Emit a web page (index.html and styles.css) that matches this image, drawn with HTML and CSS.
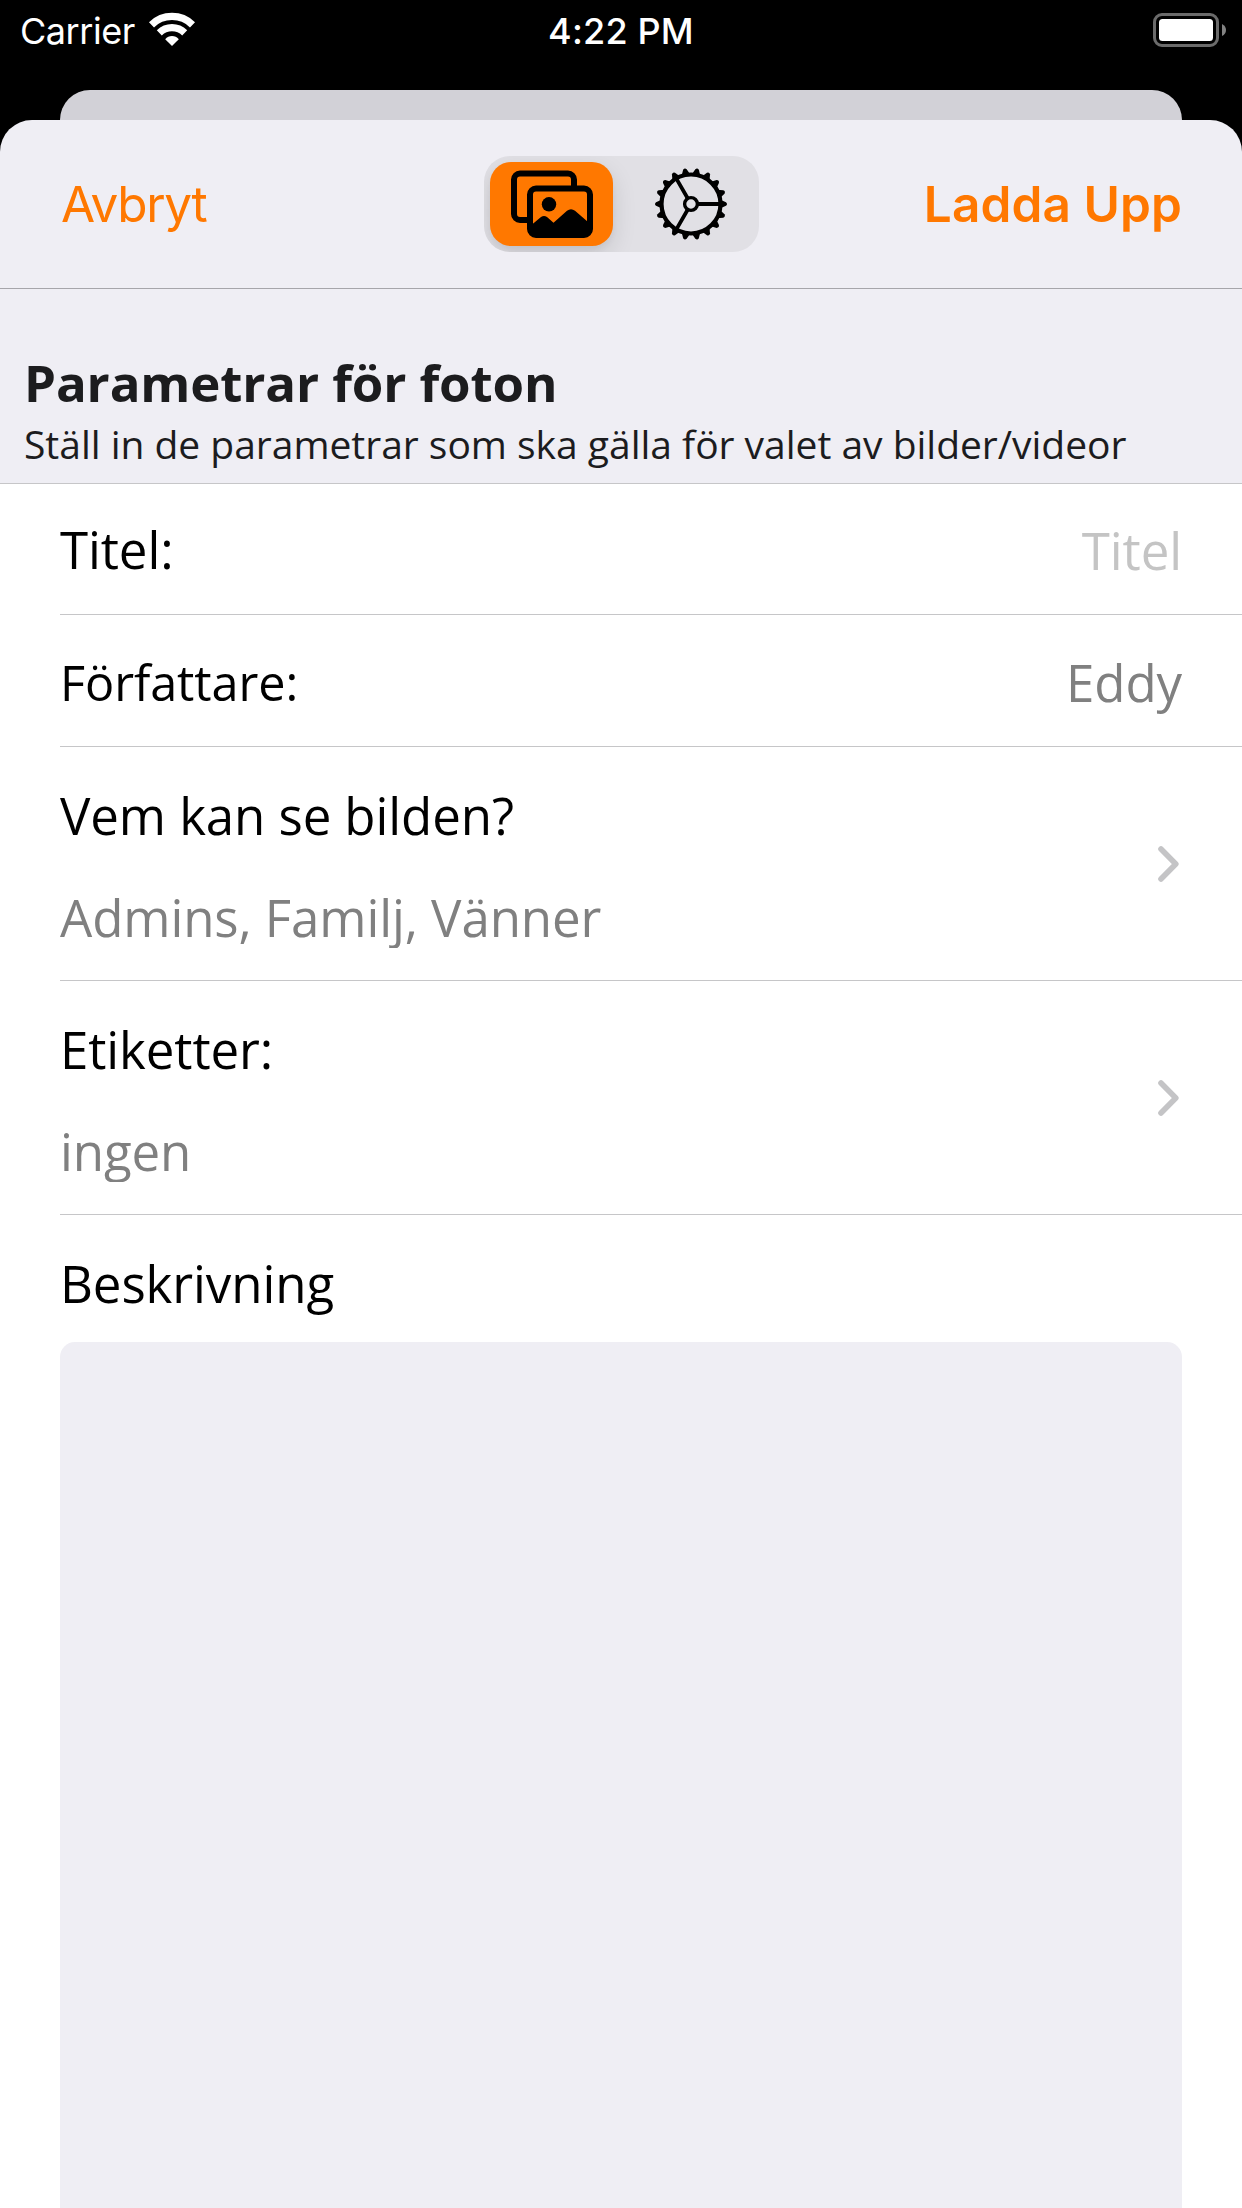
FILE: index.html
```html
<!DOCTYPE html>
<html lang="sv">
<head>
<meta charset="utf-8">
<title>Ladda Upp</title>
<link rel="stylesheet" href="styles.css">
</head>
<body>
<div class="screen">
  <header class="status">
    <div class="status-left">
      <span class="carrier">Carrier</span>
      <svg class="wifi" width="48" height="36" viewBox="148 11 48 36">
        <g fill="none" stroke="#fff" stroke-width="7.2">
          <path d="M151.5 24.8A29.4 29.4 0 0 1 192.5 24.8"/>
          <path d="M159.3 32.8A18.3 18.3 0 0 1 184.7 32.8"/>
        </g>
        <path fill="#fff" d="M172 46L165.2 39.3Q168 36 172 36T178.800 39.300Z"/>
      </svg>
    </div>
    <span class="time">4:22 PM</span>
    <div class="status-right">
      <svg width="74" height="34" viewBox="0 0 74 34">
        <rect x="1.500" y="1.500" width="63" height="31" rx="7.500" fill="none" stroke="#6b6b6b" stroke-width="3"/>
        <rect x="6" y="6" width="54" height="22" rx="3.500" fill="#fff"/>
        <path d="M69 11Q73 13 73 17T69 23Z" fill="#828282"/>
      </svg>
    </div>
  </header>
  <div class="back-sheet"></div>
  <main class="sheet">
    <nav class="nav">
      <span class="cancel">Avbryt</span>
      <div class="segmented">
        <div class="segment selected">
          <svg width="84" height="70" viewBox="510 169 84 70">
            <rect x="514" y="173.500" width="60" height="46.500" rx="6" fill="none" stroke="#000" stroke-width="6"/>
            <rect x="530" y="188.500" width="60" height="46.500" rx="6" fill="#ff7800" stroke="#000" stroke-width="6"/>
            <circle cx="549" cy="204.300" r="7.200"/>
            <path d="M532 224.500L541 217Q544 214.800 547 217L553.500 222.700L567 210.800Q571 207.500 575 210.800L588 222V236H532Z"/>
          </svg>
        </div>
        <div class="segment">
          <svg width="74" height="74" viewBox="-37 -37 74 74">
            <defs><path id="tooth" d="M29 -4.500L35 -1.800Q37 0 35 1.800L29 4.500Z"/></defs>
            <g fill="none" stroke="#000">
              <circle r="29.500" stroke-width="4.200"/>
              <circle r="6.400" stroke-width="3.400"/>
              <path stroke-width="3.800" d="M7 0H29M-3.500 -6.060L-14.500 -25.100M-3.500 6.060L-14.500 25.100"/>
            </g>
            <use href="#tooth"/><use href="#tooth" transform="rotate(20)"/><use href="#tooth" transform="rotate(40)"/>
            <use href="#tooth" transform="rotate(60)"/><use href="#tooth" transform="rotate(80)"/><use href="#tooth" transform="rotate(100)"/>
            <use href="#tooth" transform="rotate(120)"/><use href="#tooth" transform="rotate(140)"/><use href="#tooth" transform="rotate(160)"/>
            <use href="#tooth" transform="rotate(180)"/><use href="#tooth" transform="rotate(200)"/><use href="#tooth" transform="rotate(220)"/>
            <use href="#tooth" transform="rotate(240)"/><use href="#tooth" transform="rotate(260)"/><use href="#tooth" transform="rotate(280)"/>
            <use href="#tooth" transform="rotate(300)"/><use href="#tooth" transform="rotate(320)"/><use href="#tooth" transform="rotate(340)"/>
          </svg>
        </div>
      </div>
      <span class="upload">Ladda Upp</span>
    </nav>
    <section class="section-header">
      <h1>Parametrar för foton</h1>
      <p>Ställ in de parametrar som ska gälla för valet av bilder/videor</p>
    </section>
    <div class="list">
      <div class="row row-title">
        <span class="label">Titel:</span>
        <span class="input placeholder">Titel</span>
      </div>
      <div class="row row-author">
        <span class="label label-fit">Författare:</span>
        <span class="input">Eddy</span>
      </div>
      <div class="row row-link">
        <div class="stack">
          <span class="label">Vem kan se bilden?</span>
          <span class="value">Admins, Familj, Vänner</span>
        </div>
        <svg class="chevron" width="21" height="36" viewBox="0 0 21 36"><path d="M3 3L17.800 18L3 33"/></svg>
      </div>
      <div class="row row-link">
        <div class="stack">
          <span class="label">Etiketter:</span>
          <span class="value">ingen</span>
        </div>
        <svg class="chevron" width="21" height="36" viewBox="0 0 21 36"><path d="M3 3L17.800 18L3 33"/></svg>
      </div>
      <div class="description">
        <span class="label">Beskrivning</span>
        <div class="textarea"></div>
      </div>
    </div>
  </main>
</div>
</body>
</html>
```
FILE: styles.css
```css
* { box-sizing: border-box; }

body {
  margin: 0;
  background: #000;
  font-family: "Open Sans", "Noto Sans", sans-serif;
}

.screen {
  display: flex;
  flex-direction: column;
  width: 1242px;
  height: 2208px;
  overflow: hidden;
}

svg { display: block; }

.status {
  display: grid;
  grid-template-columns: 1fr auto 1fr;
  height: 90px;
  padding: 0 15px;
  color: #fff;
  font-family: Inter, "Liberation Sans", sans-serif;
  font-size: 36px;
  line-height: 62px;
}

.status-left { display: flex; gap: 12px; padding-left: 5px; }
.carrier { width: 116px; white-space: nowrap; letter-spacing: -0.45px; }
.wifi { margin-top: 11px; }
.time { font-weight: 500; letter-spacing: 0.2px; }
.status-right { display: flex; justify-content: flex-end; padding-top: 13px; }

.back-sheet {
  height: 30px;
  margin: 0 60px;
  background: #d2d1d7;
  border-radius: 30px 30px 0 0;
}

.sheet {
  display: flex;
  flex: 1;
  flex-direction: column;
  overflow: hidden;
  background: #efeef4;
  border-radius: 32px 32px 0 0;
}

.nav {
  display: grid;
  grid-template-columns: 1fr 275px 1fr;
  align-items: center;
  height: 169px;
  padding: 0 60px;
  border-bottom: 1px solid #a6a5aa;
  color: #ff7800;
  font-family: Inter, "Liberation Sans", sans-serif;
  font-size: 49.5px;
  line-height: 60px;
}

.cancel { padding-left: 1px; letter-spacing: -1.3px; }
.upload { justify-self: end; font-weight: 600; letter-spacing: 0.1px; }

.segmented {
  display: grid;
  grid-template-columns: 123px 1fr;
  height: 96px;
  padding: 6px;
  overflow: hidden;
  background: #e1e0e5;
  border-radius: 26px;
}

.segment { display: flex; align-items: center; justify-content: center; }
.segment + .segment { padding-left: 17px; }

.selected {
  padding-left: 2px;
  background: #ff7800;
  border-radius: 21px;
  box-shadow: 0 9px 24px rgba(0, 0, 0, 0.12), 0 4px 6px rgba(0, 0, 0, 0.04);
}

.section-header {
  display: flex;
  flex-direction: column;
  gap: 6px;
  height: 195px;
  padding: 63px 24px 0;
  border-bottom: 1px solid #c6c6c8;
  color: #1c1c1e;
  white-space: nowrap;
}

.section-header h1 { margin: 0; font-size: 51px; line-height: 60px; letter-spacing: -0.12px; }
.section-header p { margin: 0; font-size: 39px; line-height: 52px; letter-spacing: -0.02px; }

.list {
  display: flex;
  flex: 1;
  flex-direction: column;
  padding-left: 60px;
  background: #fff;
  color: #000;
  font-size: 51px;
  line-height: 70px;
  letter-spacing: -0.09px;
}

.row {
  display: flex;
  align-items: center;
  justify-content: space-between;
  padding-right: 60px;
  border-bottom: 1px solid #c6c6c8;
}

.row-title { height: 131px; }
.row-author { height: 132px; }
.row-link { height: 234px; padding-right: 63px; }

.label-fit { padding-top: 3px; font-size: 48.6px; }

.input { padding-top: 2px; color: #808080; }
.placeholder { color: #c4c4c4; }

.stack { display: flex; flex-direction: column; gap: 36px; }
.value { overflow: hidden; color: #808080; line-height: 62px; }

.chevron path {
  fill: none;
  stroke: #c4c4c6;
  stroke-width: 5.6;
  stroke-linecap: round;
  stroke-linejoin: round;
}

.description {
  display: flex;
  flex: 1;
  flex-direction: column;
  gap: 24px;
  padding: 33px 60px 0 0;
}

.textarea {
  flex: 1;
  background: #efeef4;
  border-radius: 15px 15px 0 0;
}
```
